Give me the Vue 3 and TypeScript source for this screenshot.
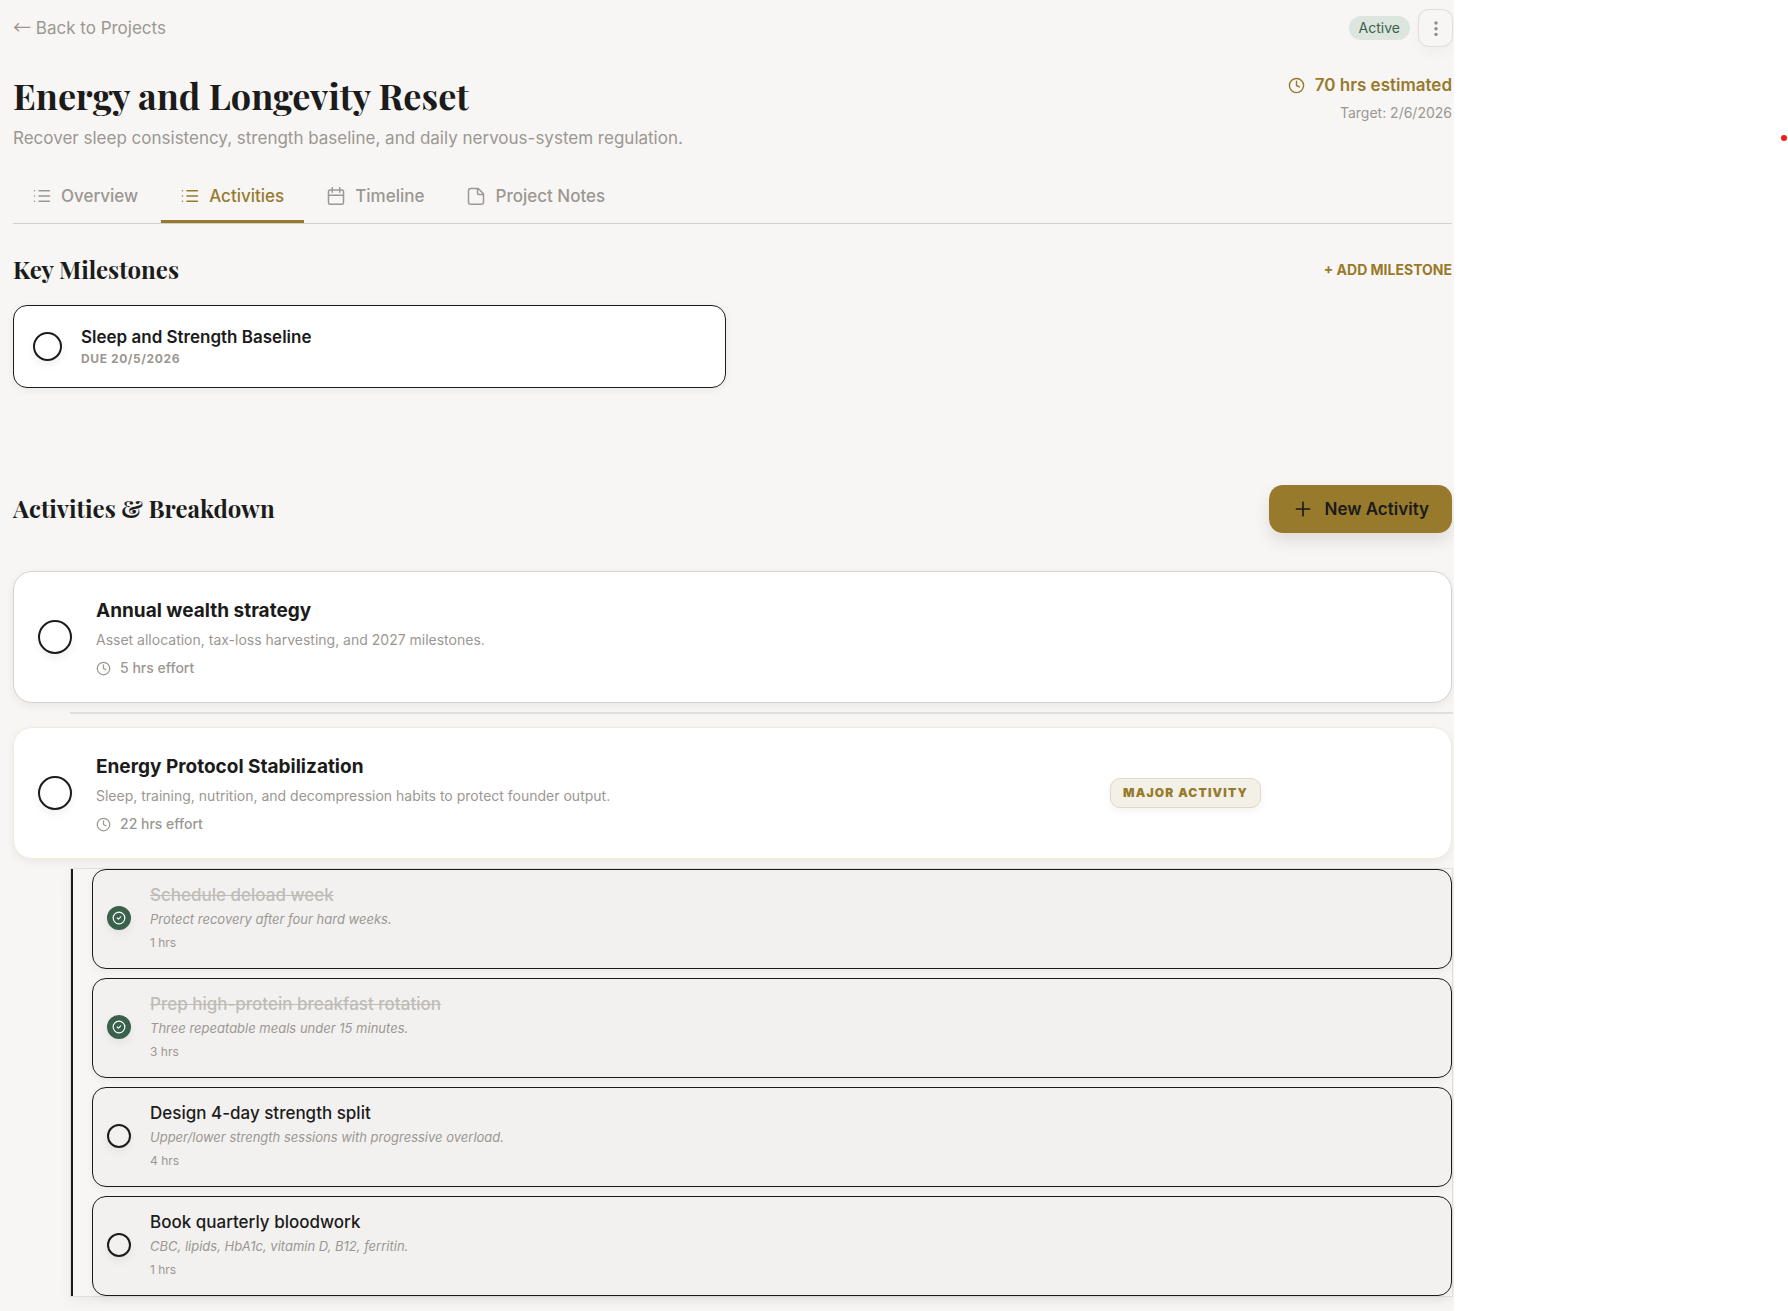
<script setup lang="ts">
import { ref } from 'vue'

interface Subtask {
  title: string
  note: string
  hours: number
  done: boolean
}

interface Activity {
  title: string
  description: string
  hours: number
  major: boolean
  subtasks: Subtask[]
}

const tabs = [
  { id: 'overview', label: 'Overview', icon: 'list' },
  { id: 'activities', label: 'Activities', icon: 'list' },
  { id: 'timeline', label: 'Timeline', icon: 'calendar' },
  { id: 'notes', label: 'Project Notes', icon: 'note' },
]
const activeTab = ref('activities')

const milestones = ref([{ title: 'Sleep and Strength Baseline', due: '20/5/2026', done: false }])

const activities = ref<Activity[]>([
  {
    title: 'Annual wealth strategy',
    description: 'Asset allocation, tax-loss harvesting, and 2027 milestones.',
    hours: 5,
    major: false,
    subtasks: [],
  },
  {
    title: 'Energy Protocol Stabilization',
    description: 'Sleep, training, nutrition, and decompression habits to protect founder output.',
    hours: 22,
    major: true,
    subtasks: [
      { title: 'Schedule deload week', note: 'Protect recovery after four hard weeks.', hours: 1, done: true },
      { title: 'Prep high-protein breakfast rotation', note: 'Three repeatable meals under 15 minutes.', hours: 3, done: true },
      { title: 'Design 4-day strength split', note: 'Upper/lower strength sessions with progressive overload.', hours: 4, done: false },
      { title: 'Book quarterly bloodwork', note: 'CBC, lipids, HbA1c, vitamin D, B12, ferritin.', hours: 1, done: false },
    ],
  },
])
</script>

<template>
  <div class="shell">
    <main class="panel">
      <div class="topbar">
        <a class="back" href="#projects"><span class="arrow">←</span> Back to Projects</a>
        <div class="topbar-actions">
          <span class="status">Active</span>
          <button class="menu" type="button" aria-label="Project menu">
            <svg width="17" height="17" viewBox="0 0 17 17" fill="currentColor">
              <circle cx="9" cy="3" r="1.7" /><circle cx="9" cy="8.7" r="1.7" /><circle cx="9" cy="14.4" r="1.7" />
            </svg>
          </button>
        </div>
      </div>

      <header class="header">
        <div>
          <h1>Energy and Longevity Reset</h1>
          <p class="subtitle">Recover sleep consistency, strength baseline, and daily nervous-system regulation.</p>
        </div>
        <div class="meta">
          <div class="estimate">
            <svg class="icon" width="17" height="17" viewBox="0 0 24 24">
              <circle cx="12" cy="12" r="10" /><path d="M12 6v6l4 2" />
            </svg>
            <span>70 hrs estimated</span>
          </div>
          <div class="target">Target: 2/6/2026</div>
        </div>
      </header>

      <nav class="tabs">
        <button
          v-for="tab in tabs"
          :key="tab.id"
          type="button"
          class="tab"
          :class="{ active: tab.id === activeTab }"
          @click="activeTab = tab.id"
        >
          <svg class="icon" width="18" height="18" viewBox="0 0 24 24">
            <path v-if="tab.icon === 'list'" d="M8 5h14M8 12h14M8 19h14M2 5h.01M2 12h.01M2 19h.01" />
            <template v-else-if="tab.icon === 'calendar'">
              <rect x="2" y="4" width="20" height="19" rx="2" /><path d="M7 1v6M17 1v6M2 11h20" />
            </template>
            <path v-else d="M15 2H5a3 3 0 0 0-3 3v15a3 3 0 0 0 3 3h14a3 3 0 0 0 3-3V9zM14 2v6a2 2 0 0 0 2 2h6" />
          </svg>
          <span>{{ tab.label }}</span>
        </button>
      </nav>

      <section class="milestones">
        <div class="section-head">
          <h2>Key Milestones</h2>
          <button class="add" type="button">+ ADD MILESTONE</button>
        </div>
        <div class="milestone-grid">
          <article v-for="m in milestones" :key="m.title" class="milestone">
            <input v-model="m.done" class="check check-md" type="checkbox" :aria-label="m.title" />
            <div>
              <h3>{{ m.title }}</h3>
              <p class="due">DUE {{ m.due }}</p>
            </div>
          </article>
        </div>
      </section>

      <section class="activities">
        <div class="section-head">
          <h2>Activities &amp; Breakdown</h2>
          <button class="new" type="button">
            <svg class="icon" width="20" height="20" viewBox="0 0 24 24"><path d="M4 12h16M12 4v16" /></svg>
            <span>New Activity</span>
          </button>
        </div>

        <div v-for="a in activities" :key="a.title" class="group">
          <article class="activity" :class="{ major: a.major }">
            <input class="check check-lg" type="checkbox" :aria-label="a.title" />
            <div class="activity-body">
              <h3>{{ a.title }}</h3>
              <p class="description">{{ a.description }}</p>
              <p class="effort">
                <svg class="icon" width="15" height="15" viewBox="0 0 24 24">
                  <circle cx="12" cy="12" r="10" /><path d="M12 6v6l4 2" />
                </svg>
                <span>{{ a.hours }} hrs effort</span>
              </p>
            </div>
            <span v-if="a.major" class="tag">MAJOR ACTIVITY</span>
          </article>
          <ul class="subtasks">
            <li v-for="s in a.subtasks" :key="s.title" class="subtask" :class="{ done: s.done }">
              <span class="sub-check">
                <input v-model="s.done" class="check check-sm" type="checkbox" :aria-label="s.title" />
                <svg v-if="s.done" class="tick" width="14" height="14" viewBox="0 0 24 24">
                  <circle cx="12" cy="12" r="10" /><path d="M9 12l2 2 4-4" />
                </svg>
              </span>
              <div>
                <h4>{{ s.title }}</h4>
                <p class="note">{{ s.note }}</p>
                <p class="hours">{{ s.hours }} hrs</p>
              </div>
            </li>
          </ul>
        </div>
      </section>
    </main>
    <aside class="side"><span class="dot"></span></aside>
  </div>
</template>

<style>
body {
  background: #fff;
}
</style>

<style scoped>
.shell {
  --ink: #1b1b1b;
  --muted: #9b9792;
  --gold: #977a2b;
  --green: #3a614a;
  --ring: #e1dfd9;
  display: flex;
  min-height: 100vh;
  font-family: Inter, "Liberation Sans", sans-serif;
  color: var(--ink);
}
.shell * {
  box-sizing: border-box;
}
h1, h2, h3, h4, p, ul {
  margin: 0;
  padding: 0;
}
button {
  font-family: inherit;
  border: 0;
  background: none;
  padding: 0;
  cursor: pointer;
}
.icon {
  flex: none;
  fill: none;
  stroke: currentColor;
  stroke-width: 2;
  stroke-linecap: round;
  stroke-linejoin: round;
}
.panel {
  flex: 1;
  min-width: 0;
  overflow: hidden;
  background: #f7f6f4;
  padding: 10px 2px 14px 13px;
}
.side {
  flex: none;
  width: 334px;
  display: flex;
  justify-content: flex-end;
  padding: 135px 1px 0 0;
}
.dot {
  width: 6px;
  height: 6px;
  border-radius: 50%;
  background: #ee1c1c;
}

.topbar,
.header,
.section-head {
  display: flex;
  justify-content: space-between;
}
.topbar,
.section-head {
  align-items: center;
}
.back {
  font-size: 17px;
  line-height: 24px;
  color: var(--muted);
  text-decoration: none;
}
.arrow {
  font-family: "Noto Sans CJK JP", sans-serif;
  font-size: 18px;
  line-height: 1;
}
.topbar-actions {
  display: flex;
  align-items: center;
  gap: 9px;
}
.status {
  padding: 0 10px;
  border-radius: 12px;
  background: #dde5df;
  color: var(--green);
  font-size: 14px;
  line-height: 24px;
}
.menu {
  display: flex;
  align-items: center;
  justify-content: center;
  width: 33px;
  height: 36px;
  border-radius: 10px;
  color: #8f8c88;
  box-shadow: 0 0 0 1px var(--ring), 0 6px 14px rgba(0, 0, 0, 0.04);
}

.header {
  margin-top: 25px;
}
h1,
h2 {
  font-family: "Playfair Display", "Liberation Serif", serif;
  font-weight: 700;
}
h1 {
  font-size: 36px;
  line-height: 48px;
}
h2 {
  padding-bottom: 2px;
  font-size: 24px;
  line-height: 30px;
}
.subtitle {
  margin-top: 7px;
  font-size: 17px;
  line-height: 24px;
  color: var(--muted);
}
.meta {
  padding-top: 1px;
  text-align: right;
}
.estimate {
  display: flex;
  align-items: center;
  justify-content: flex-end;
  gap: 10px;
  color: var(--gold);
  font-size: 17px;
  font-weight: 600;
  line-height: 26px;
}
.target {
  margin-top: 3px;
  color: var(--muted);
  font-size: 14px;
  line-height: 24px;
}

.tabs {
  display: flex;
  gap: 3px;
  margin-top: 20px;
  border-bottom: 1px solid #d3d1ce;
}
.tab {
  display: flex;
  align-items: center;
  gap: 10px;
  padding: 14px 20px 12px;
  border-bottom: 3px solid transparent;
  color: var(--muted);
  font-size: 17px;
  font-weight: 500;
  line-height: 24px;
}
.tab.active {
  color: var(--gold);
  border-bottom-color: var(--gold);
}

.milestones {
  margin-top: 30px;
}
.add {
  color: var(--gold);
  font-size: 14px;
  font-weight: 700;
  line-height: 24px;
}
.milestone-grid {
  display: grid;
  grid-template-columns: 1fr 1fr;
  gap: 14px;
  margin-top: 19px;
}
.milestone {
  display: flex;
  align-items: center;
  gap: 19px;
  padding: 19px;
  border: 1px solid var(--ink);
  border-radius: 14px;
  background: #fff;
  box-shadow: 0 2px 8px rgba(0, 0, 0, 0.06);
}
.milestone h3 {
  font-size: 17px;
  font-weight: 600;
  line-height: 24px;
}
.due {
  margin-top: 1px;
  color: var(--muted);
  font-size: 12px;
  font-weight: 700;
  line-height: 18px;
  letter-spacing: 0.05em;
}

.check {
  flex: none;
  appearance: none;
  display: block;
  margin: 0;
  border: 2px solid var(--ink);
  border-radius: 50%;
  box-shadow: 0 4px 8px rgba(0, 0, 0, 0.06);
}
.check-md {
  width: 29px;
  height: 29px;
}
.check-lg {
  width: 34px;
  height: 34px;
}
.check-sm {
  width: 24px;
  height: 24px;
}
.check-sm:checked {
  border-color: var(--green);
  background: var(--green);
}

.activities {
  margin-top: 97px;
}
.activities .section-head {
  margin-bottom: 38px;
}
.new {
  display: flex;
  align-items: center;
  gap: 11px;
  height: 48px;
  padding: 0 23px 0 24px;
  border-radius: 14px;
  background: var(--gold);
  color: var(--ink);
  font-size: 17px;
  font-weight: 600;
  line-height: 24px;
  box-shadow: 0 8px 16px rgba(0, 0, 0, 0.1);
}
.group + .group {
  margin-top: 14px;
}
.activity {
  display: flex;
  align-items: center;
  gap: 24px;
  padding: 24px;
  border: 1px solid #d6d2cd;
  border-radius: 19px;
  background: #fff;
  box-shadow: 0 3px 10px rgba(0, 0, 0, 0.06);
}
.activity.major {
  border-color: #f2ecdb;
}
.activity-body {
  flex: 1;
  padding-top: 2px;
}
.activity h3 {
  font-size: 19px;
  font-weight: 700;
  line-height: 26px;
}
.description {
  margin-top: 5px;
  color: var(--muted);
  font-size: 14px;
  line-height: 22px;
}
.effort {
  display: flex;
  align-items: center;
  gap: 9px;
  margin-top: 7px;
  color: var(--muted);
  font-size: 14px;
  font-weight: 500;
  line-height: 20px;
}
.tag {
  margin-right: 166px;
  padding: 5px 12px;
  border: 1px solid #e3d9c1;
  border-radius: 10px;
  background: #f3f0e8;
  color: var(--gold);
  font-size: 12px;
  font-weight: 900;
  line-height: 18px;
  letter-spacing: 0.1em;
  box-shadow: 0 3px 8px rgba(0, 0, 0, 0.05);
}

.subtasks {
  display: flex;
  flex-direction: column;
  gap: 9px;
  margin: 10px 0 0 58px;
  padding-left: 19px;
  border-left: 2px solid var(--ink);
  list-style: none;
  box-shadow: 0 0 0 1px var(--ring), 0 6px 14px rgba(0, 0, 0, 0.05);
}
.subtask {
  display: flex;
  align-items: center;
  gap: 19px;
  padding: 13px 14px 16px;
  border: 1px solid var(--ink);
  border-radius: 14px;
  background: #f3f1ef;
  box-shadow: 0 3px 8px rgba(0, 0, 0, 0.05);
}
.sub-check {
  position: relative;
}
.tick {
  position: absolute;
  inset: 5px;
  fill: none;
  stroke: #fff;
  stroke-width: 2;
  stroke-linecap: round;
  stroke-linejoin: round;
  pointer-events: none;
}
.subtask h4 {
  font-size: 17px;
  font-weight: 500;
  line-height: 24px;
}
.subtask.done h4 {
  color: #bfbcb8;
  text-decoration: line-through;
}
.note {
  margin-top: 2px;
  color: var(--muted);
  font-size: 13px;
  font-style: italic;
  line-height: 20px;
}
.hours {
  margin-top: 5px;
  color: var(--muted);
  font-size: 12px;
  line-height: 18px;
}
</style>
